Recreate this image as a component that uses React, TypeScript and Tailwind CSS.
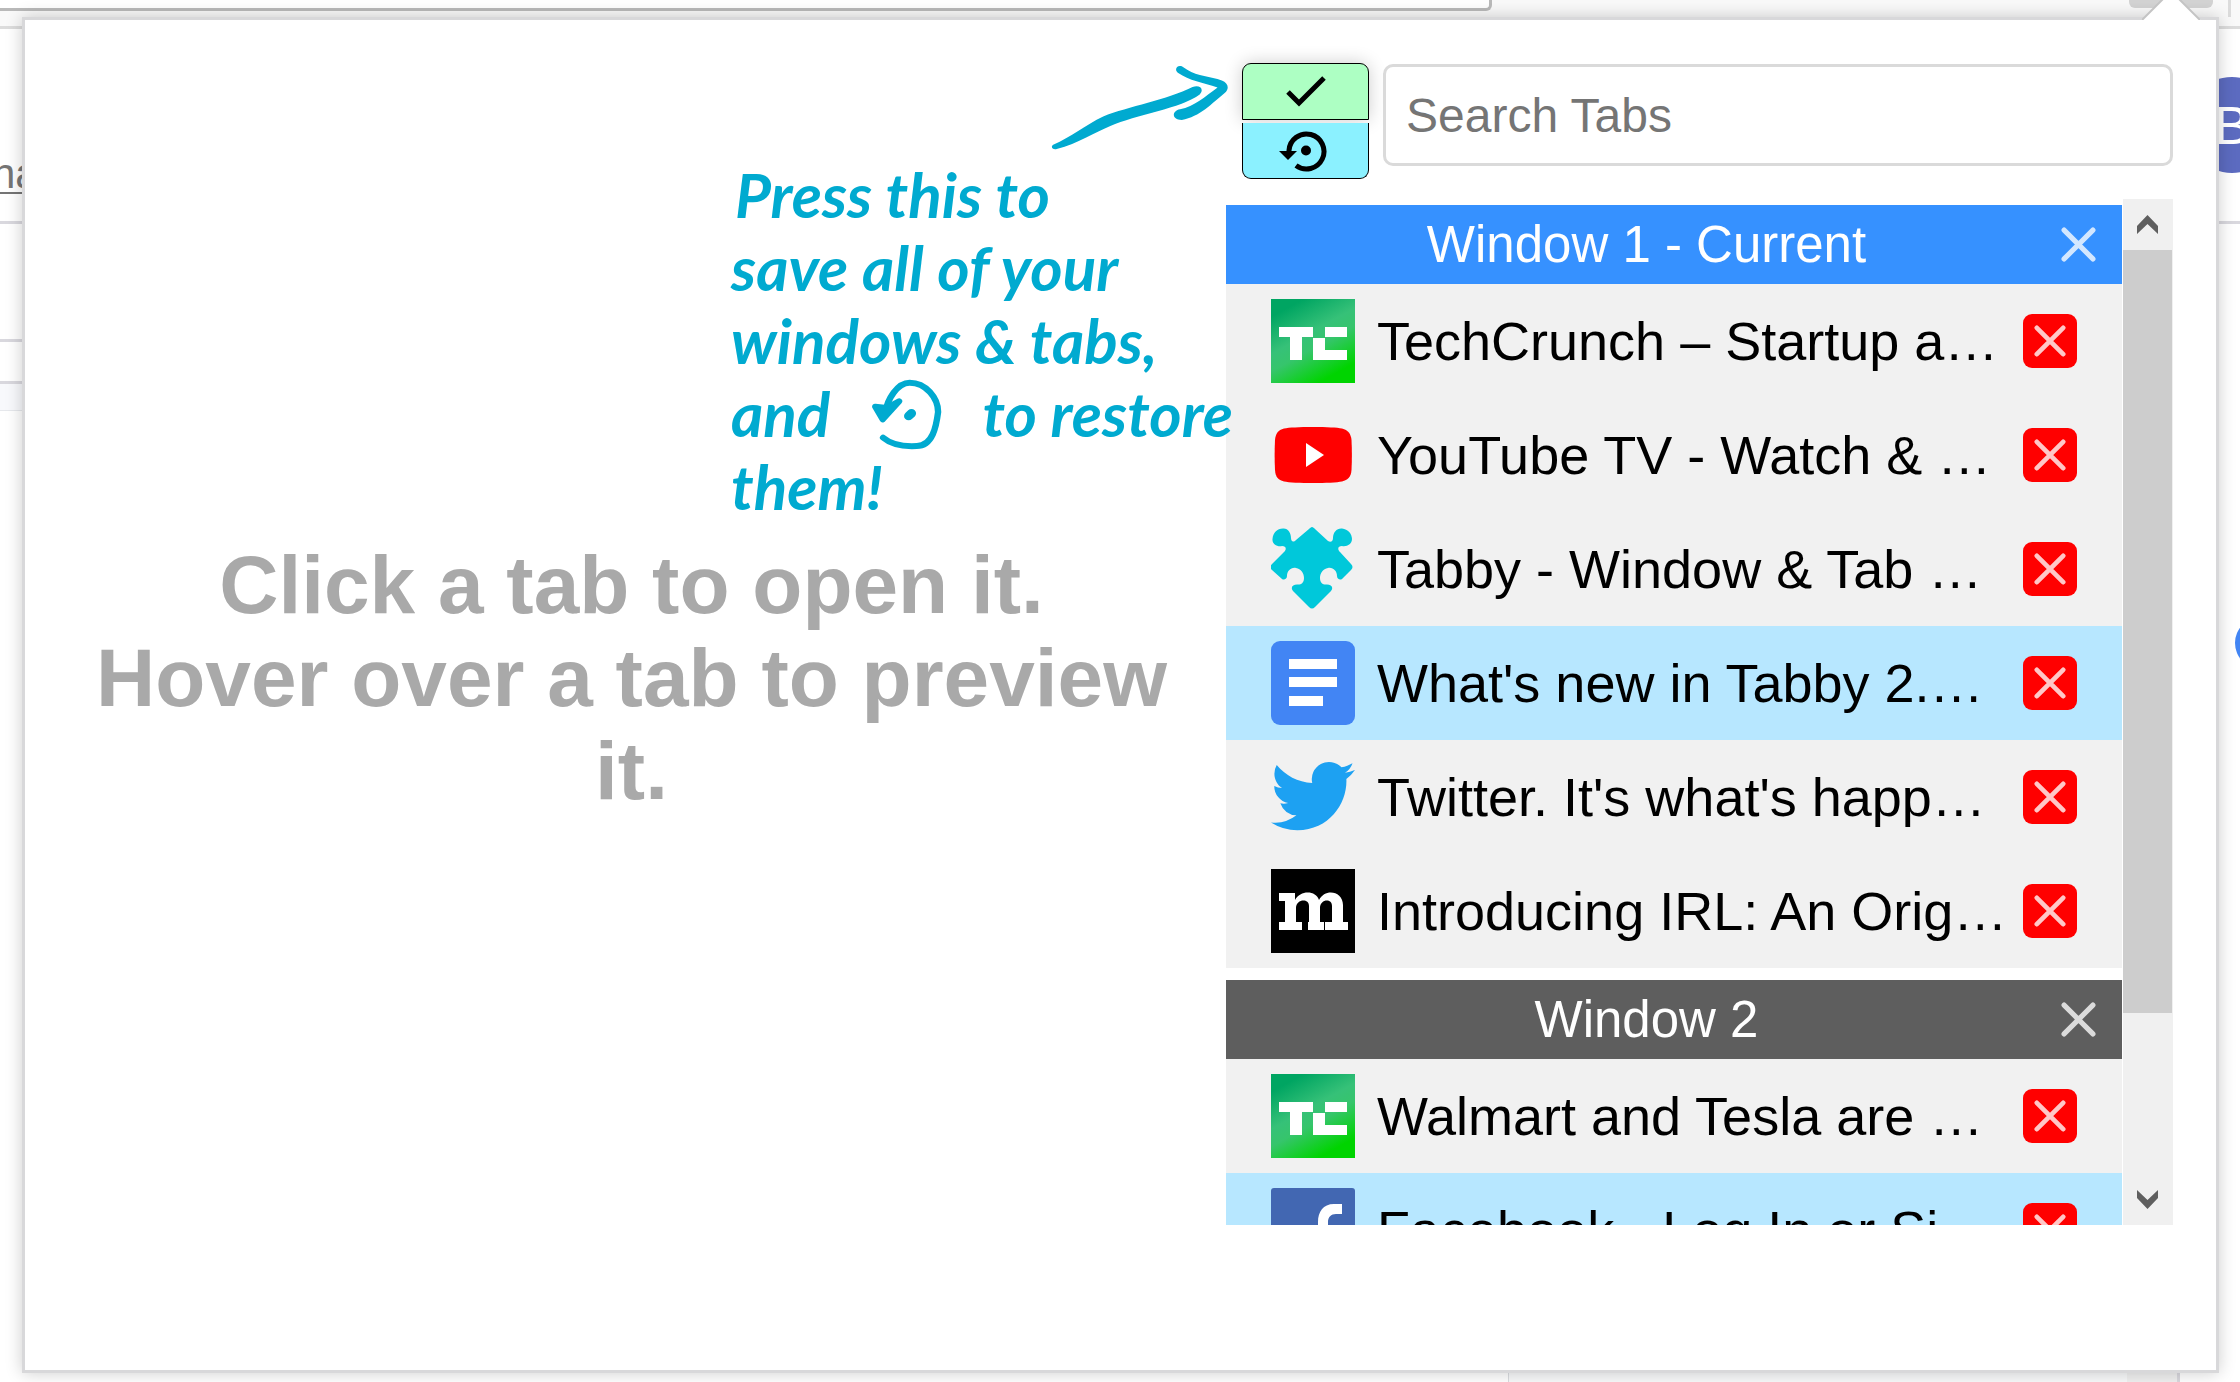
import React from "react";

const INK = "#00aad0";

type Site = "techcrunch" | "youtube" | "tabby" | "docs" | "twitter" | "medium" | "facebook";

interface Tab {
  site: Site;
  title: string;
  active?: boolean;
}

interface BrowserWindow {
  name: string;
  current?: boolean;
  tabs: Tab[];
}

const windows: BrowserWindow[] = [
  {
    name: "Window 1 - Current",
    current: true,
    tabs: [
      { site: "techcrunch", title: "TechCrunch – Startup a…" },
      { site: "youtube", title: "YouTube TV - Watch & …" },
      { site: "tabby", title: "Tabby - Window & Tab …" },
      { site: "docs", title: "What's new in Tabby 2.…", active: true },
      { site: "twitter", title: "Twitter. It's what's happ…" },
      { site: "medium", title: "Introducing IRL: An Orig…" },
    ],
  },
  {
    name: "Window 2",
    tabs: [
      { site: "techcrunch", title: "Walmart and Tesla are …" },
      { site: "facebook", title: "Facebook - Log In or Si…", active: true },
    ],
  },
];

function Favicon({ site }: { site: Site }) {
  const common = { viewBox: "0 0 84 84", className: "size-[84px] shrink-0", "aria-hidden": true };
  switch (site) {
    case "techcrunch":
      return (
        <svg {...common}>
          <defs>
            <linearGradient id="tc" x1="0.2" y1="0" x2="0.75" y2="1">
              <stop offset="0.08" stopColor="#00a562" />
              <stop offset="0.42" stopColor="#36c178" />
              <stop offset="0.58" stopColor="#36c56c" />
              <stop offset="0.92" stopColor="#00d400" />
            </linearGradient>
          </defs>
          <rect width="84" height="84" fill="url(#tc)" />
          <path d="M8 28h34v10H31v23H19V38H8zM54 28h22v10H54zM42 39h12v12h22v10H42z" fill="#fff" />
        </svg>
      );
    case "youtube":
      return (
        <svg {...common}>
          <path
            d="M42 28C56 28 66 28.500 71 29.500C77 31 80 35 80.500 41C81 50 81 62 80.500 71C80 78 77 81 71 82.500C62 84.500 22 84.500 13 82.500C7 81 4.500 78 4 71C3.500 62 3.500 50 4 41C4.500 35 7 31 13 29.500C18 28.500 28 28 42 28Z"
            transform="translate(0 -14)"
            fill="#f00"
          />
          <path d="M35 30l18 12-18 12z" fill="#fff" />
        </svg>
      );
    case "tabby":
      return (
        <svg {...common}>
          <path
            d="M41 0C42 0 43 1 44 2L57 14C60 16 62 14 62 11C62 5 66 1 71 1.500C77 2 81 7 81 12C81 17 76 20 71 19C67 19 66 22 69 25L80 37C82 39 82 41 80 43L71 52C69 53.500 66 52 66 49C66 44 62 40 57 41C52 42 49 46 49 51C49 56 52 58 56 57.500C60 57.500 63 60 60 64L44 80C42 82 40 82 38 80L22 64C19 60 22 57.500 26 57.500C30 58 33 56 33 51C33 46 30 42 25 41C20 40 16 44 16 49C16 52 13 53.500 11 52L1 43C-1 41 -1 39 1 37L13 25C16 22 15 19 11 19C6 20 1 17 1.500 12C2 6 6 1.500 12 1.500C17 1 20 6 20 11C20 14 22 16 25 13L38 2C39 1 40 0 41 0Z"
            fill="#00c8da"
          />
        </svg>
      );
    case "docs":
      return (
        <svg {...common}>
          <rect width="84" height="84" rx="9" fill="#4285f4" />
          <path d="M18 18h48v10H18zM18 36h48v10H18zM18 55h34v10H18z" fill="#fff" />
        </svg>
      );
    case "twitter":
      return (
        <svg {...common}>
          <path
            transform="translate(0 -1) scale(3.500)"
            d="M23.950 4.570a10 10 0 0 1-2.820.770 4.960 4.960 0 0 0 2.160-2.720c-.950.550-2 .960-3.130 1.190a4.920 4.920 0 0 0-8.380 4.480C7.690 8.100 4.070 6.130 1.640 3.160a4.820 4.820 0 0 0-.670 2.480c0 1.710.870 3.210 2.190 4.100a4.900 4.900 0 0 1-2.230-.610v.060a4.920 4.920 0 0 0 3.950 4.830 5 5 0 0 1-2.210.080 4.940 4.940 0 0 0 4.600 3.420A9.870 9.870 0 0 1 0 19.540a14 14 0 0 0 7.550 2.210c9.050 0 14-7.500 14-13.980 0-.210 0-.420-.020-.630a9.940 9.940 0 0 0 2.460-2.550z"
            fill="#1da1f2"
          />
        </svg>
      );
    case "medium":
      return (
        <svg {...common}>
          <rect width="84" height="84" fill="#000" />
          <path
            d="M8 24H24V31C29 21 45 21 48 31C54 19 72 22 72 36V53H77V61H54V53H61V37C61 29 49 30 49 39V53H53V61H37V53H38V37C38 29 25 30 25 39V53H31V61H8V53H14V32H8Z"
            fill="#fff"
          />
        </svg>
      );
    case "facebook":
      return (
        <svg {...common}>
          <rect width="84" height="84" rx="3" fill="#4267b2" />
          <path d="M57 84V52h11l2-13H57v-5c0-5 3-8 8-8h6V16H63C52 16 47 24 47 34v5H36v13h11v32z" fill="#fff" />
        </svg>
      );
  }
}

function Cross({ className }: { className: string }) {
  return (
    <svg viewBox="0 0 34 34" className={className} fill="none" stroke="#fff" strokeOpacity="0.78" strokeWidth="5" strokeLinecap="round" aria-hidden="true">
      <path d="M3 3l28 28M31 3L3 31" />
    </svg>
  );
}

function TabRow({ tab }: { tab: Tab }) {
  return (
    <li className={tab.active ? "flex h-[114px] items-center bg-[#b7e7ff] px-[45px]" : "flex h-[114px] items-center bg-[#f1f1f1] px-[45px]"}>
      <a href="#" className="flex min-w-0 flex-1 items-center gap-[22px]">
        <Favicon site={tab.site} />
        <span className="overflow-hidden text-[54px] leading-[60px] whitespace-nowrap text-black">{tab.title}</span>
      </a>
      <button type="button" aria-label={`Close ${tab.title}`} className="flex size-[54px] shrink-0 items-center justify-center rounded-[9px] bg-[#ff0000]">
        <Cross className="size-8" />
      </button>
    </li>
  );
}

function WindowGroup({ win }: { win: BrowserWindow }) {
  return (
    <section>
      <header className={win.current ? "flex h-[79px] items-center bg-[#3691ff] pr-[26px]" : "flex h-[79px] items-center bg-[#5e5e5e] pr-[26px]"}>
        <h2 className="flex-1 pl-[6px] text-center text-[51px] leading-[60px] text-white">{win.name}</h2>
        <button type="button" aria-label={`Close ${win.name}`}>
          <Cross className="size-[35px]" />
        </button>
      </header>
      <ul>
        {win.tabs.map((tab) => (
          <TabRow key={tab.title} tab={tab} />
        ))}
      </ul>
    </section>
  );
}

function Scrollbar() {
  return (
    <div className="flex w-[50px] shrink-0 flex-col bg-[#f0f0f0] pr-px">
      <button type="button" aria-label="Scroll up" className="flex h-[51px] items-center justify-center">
        <svg viewBox="0 0 21 19" className="w-[21px]" aria-hidden="true">
          <path d="M0 11L10.500 0L21 11V19L10.500 9L0 19Z" fill="#5f5f5f" />
        </svg>
      </button>
      <div className="h-[763px] bg-[#cdcdcd]" />
      <button type="button" aria-label="Scroll down" className="mt-auto flex h-[51px] items-center justify-center">
        <svg viewBox="0 0 21 19" className="w-[21px]" aria-hidden="true">
          <path d="M0 8L10.500 19L21 8V0L10.500 10L0 0Z" fill="#5f5f5f" />
        </svg>
      </button>
    </div>
  );
}

/* Handwritten hint lying over the popup, with its arrow to the save button. */
function HandwrittenHint() {
  return (
    <div className="pointer-events-none absolute top-[45px] right-[983px] w-[502px] font-['Lato','Open_Sans',sans-serif] text-[62px] leading-[73px] font-bold whitespace-nowrap text-[#00aad0] italic">
      <svg viewBox="984 76 498 254" preserveAspectRatio="none" className="mr-1 ml-auto block h-[85px] w-[178px]" fill={INK} aria-hidden="true">
        <path d="M990 314C1040 292 1080 255 1130 230C1200 200 1310 180 1380 142C1400 134 1414 148 1400 164C1350 205 1220 225 1150 258C1110 275 1060 310 1000 327C988 330 982 320 990 314Z" />
        <path d="M1350 80C1335 75 1328 92 1340 100C1370 122 1410 130 1450 143C1415 170 1385 200 1345 208C1322 212 1320 240 1350 240C1400 232 1435 190 1470 160C1484 146 1480 130 1462 122C1430 110 1395 110 1365 90Z" />
      </svg>
      <p className="mt-2 pl-1">Press this to</p>
      <p>save all of your</p>
      <p>windows &amp; tabs,</p>
      <p className="flex items-center justify-between">
        <span>and</span>
        <svg viewBox="466 976 200 216" preserveAspectRatio="none" className="h-[72px] w-[71px]" fill="none" stroke={INK} strokeWidth="18" strokeLinecap="round" strokeLinejoin="round" aria-hidden="true">
          <path d="M506 1080C512 1040 540 990 575 990C620 990 655 1035 655 1078C650 1120 640 1180 595 1180C560 1182 525 1178 500 1155" />
          <path d="M478 1062L499 1100L545 1046L510 1066Z" fill={INK} />
          <path d="M572 1090L580 1082" strokeWidth="26" />
        </svg>
        <span>to restore</span>
      </p>
      <p>them!</p>
    </div>
  );
}

export default function App() {
  return (
    <div className="relative flex min-h-screen overflow-hidden bg-white font-['Liberation_Sans',Arial,sans-serif]">
      {/* Browser page showing round the edges of the popup */}
      <div className="absolute inset-0 flex flex-col" aria-hidden="true">
        <div className="flex h-[29px] shrink-0 items-start border-b-3 border-[#dcdcdc] bg-[#f9f9f9]">
          <div className="h-[11px] w-[1492px] rounded-br-md border-r-3 border-b-3 border-[#b9b9b9] bg-white" />
          <div className="ml-auto h-2 w-[84px] rounded-b-md bg-[#d3d3d3]" />
          <div className="mr-[9px] ml-[15px] h-[17px] w-[3px] bg-[#dcdcdc]" />
        </div>
        <div className="flex h-[195px] shrink-0 items-start justify-between border-b-3 border-[#d9d8de] pt-12">
          <span className="-ml-2 pt-[74px] text-[42px] leading-[46px] text-[#757575] underline decoration-2 underline-offset-4">na</span>
          <span className="-mr-10 flex size-24 items-center justify-center rounded-full bg-[#5c6bc0] text-[54px] text-white">B</span>
        </div>
        <div className="h-[118px] w-16 shrink-0 border-b-3 border-[#d9d8de]" />
        <div className="h-[42px] w-16 shrink-0 border-b-3 border-[#d9d8de]" />
        <div className="h-[27px] w-16 shrink-0 border-b border-[#e6e8ec] bg-[#f8f9fc]" />
        <div className="mt-[206px] -mr-[47px] size-[52px] shrink-0 self-end rounded-full bg-[#4285f4]" />
        <div className="mt-auto flex h-6">
          <div className="w-[1508px] bg-white" />
          <div className="flex-1 border-l border-[#dadce0] bg-[#f8f9fa]" />
          <div className="w-[53px] border-r-3 border-[#d9d8de] bg-[#f0f0f0]" />
          <div className="w-[60px] bg-white" />
        </div>
      </div>

      <main className="relative mt-[17px] mr-[21px] mb-[9px] ml-[22px] flex flex-1 border-3 border-[#d8d8da] bg-white shadow-[0_0_16px_rgba(0,0,0,0.2)]">
        {/* Pointer to the toolbar button */}
        <svg viewBox="0 0 60 20" className="absolute -top-5 right-[14px] w-[60px]" aria-hidden="true">
          <path d="M0 20L21 -1H37L59 20Z" fill="#fff" />
          <path d="M0 20L21 -1M37 -1L58 20" fill="none" stroke="#c4c4c4" strokeWidth="2" />
        </svg>

        <section className="flex flex-1 items-start justify-center pt-[518px] pr-9 pl-12">
          <h1 className="text-center text-[82px] leading-[93px] font-bold text-[#a9a9a9]">
            Click a tab to open it.
            <br />
            Hover over a tab to preview it.
          </h1>
        </section>

        <section className="flex w-[990px] shrink-0 flex-col pt-[43px] pr-[43px]">
          <div className="flex items-start pl-4">
            <div className="flex w-[127px] flex-col gap-[3px]">
              <button type="button" aria-label="Save session" className="flex h-[57px] items-center justify-center rounded-t-[9px] border border-black bg-[#adffc3] shadow-[0_0_18px_rgba(0,0,0,0.2)]">
                <svg viewBox="0 0 40 32" className="w-10" fill="none" stroke="#000" strokeWidth="5" aria-hidden="true">
                  <path d="M2 16L13 27L38 2" />
                </svg>
              </button>
              <button type="button" aria-label="Restore session" className="relative flex h-14 items-center justify-center rounded-b-[9px] border border-t-0 border-black bg-[#8bf1ff]">
                <svg viewBox="0 0 48 42" className="mr-[5px] w-12" aria-hidden="true">
                  <path d="M10 22V20.500A17.500 17.500 0 1 1 17 35.500" fill="none" stroke="#000" strokeWidth="5" />
                  <path d="M0 21H18L9 30Z" />
                  <circle cx="27" cy="20.500" r="5" />
                </svg>
              </button>
            </div>
            <input
              type="search"
              aria-label="Search Tabs"
              placeholder="Search Tabs"
              className="mt-px ml-[14px] h-[102px] min-w-0 flex-1 rounded-[10px] border-3 border-[#dadada] px-5 text-[48px] text-black placeholder:text-[#757575]"
            />
          </div>

          <div className="mt-5 flex h-[1026px] gap-px overflow-hidden">
            <div className="flex flex-1 flex-col gap-3 pt-[6px]">
              {windows.map((win) => (
                <WindowGroup key={win.name} win={win} />
              ))}
            </div>
            <Scrollbar />
          </div>
        </section>

        <HandwrittenHint />
      </main>
    </div>
  );
}
